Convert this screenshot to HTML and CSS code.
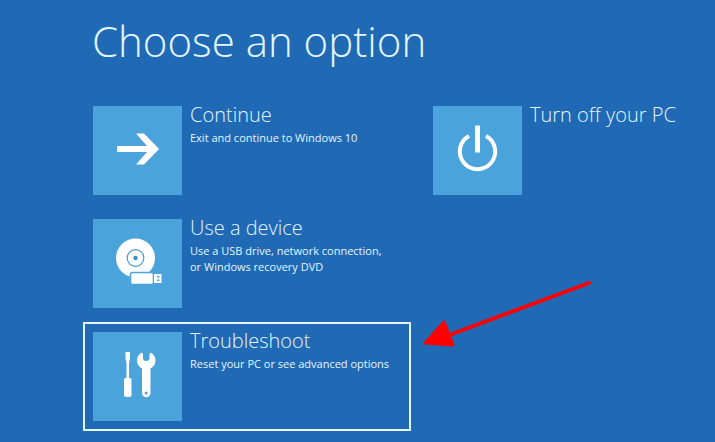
FILE: index.html
```
<!DOCTYPE html>
<html lang="en">

<head>
    <meta charset="UTF-8">
    <meta name="viewport" content="width=device-width, initial-scale=1.0">
    <title>Choose an option</title>
    <link rel="stylesheet" href="styles.css">
</head>
<body>
    <main class="screen">
        <h1>Choose an option</h1>

        <div class="options">
            <div class="column">
                <button class="option" type="button">
                    <svg class="tile" viewBox="0 0 89 89" aria-hidden="true">
                        <path d="M24 40H54L43 27.500H51L66 43L51 58.500H43L54 46H24Z" fill="#fff"/>
                    </svg>
                    <span class="text">
                        <span class="name">Continue</span>
                        <span class="detail">Exit and continue to Windows 10</span>
                    </span>
                </button>

                <button class="option" type="button">
                    <svg class="tile" viewBox="0 0 89 89" aria-hidden="true">
                        <!-- disc -->
                        <circle cx="42.500" cy="39" r="19.500" fill="#fff"/>
                        <circle cx="42.500" cy="39" r="8.300" fill="none" stroke="#4698cd" stroke-width="1.200"/>
                        <circle cx="42.500" cy="39" r="2.200" fill="#3c8fc6"/>
                        <!-- usb stick -->
                        <rect x="37.500" y="53.500" width="23" height="12" rx="2" fill="#fff" stroke="#4ba3dc" stroke-width="1.500"/>
                        <rect x="61" y="55" width="7.500" height="9" fill="#fff"/>
                        <path d="M64 57H66.500V58.500H64ZM64 60.500H66.500V62H64Z" fill="#4ba3dc"/>
                    </svg>
                    <span class="text">
                        <span class="name">Use a device</span>
                        <span class="detail">Use a USB drive, network connection,<br>or Windows recovery DVD</span>
                    </span>
                </button>

                <button class="option selected" type="button">
                    <svg class="tile" viewBox="0 0 89 89" aria-hidden="true">
                        <!-- screwdriver -->
                        <path d="M32.500 20H37V26L36 31V46H37Q38.500 46 38.500 48V63Q38.500 65 36.500 65H33Q31 65 31 63V48Q31 46 32.500 46H33.500V31L32.500 26Z" fill="#fff"/>
                        <!-- wrench -->
                        <path d="M48.500 20.500L50 22V26Q50 29 53.200 29Q56.500 29 56.500 26V22L58 20.500Q62.500 23.500 62.500 28.500Q62.500 34 57.500 36.500V61A4.200 4.200 0 0 1 49 61V36.500Q44 34 44 28.500Q44 23.500 48.500 20.500Z" fill="#fff"/>
                        <circle cx="53.200" cy="61" r="1.500" fill="#4ba3dc"/>
                    </svg>
                    <span class="text">
                        <span class="name">Troubleshoot</span>
                        <span class="detail">Reset your PC or see advanced options</span>
                    </span>
                </button>
            </div>

            <div class="column">
                <button class="option" type="button">
                    <svg class="tile" viewBox="0 0 89 89" aria-hidden="true">
                        <path d="M36 30A17.700 17.700 0 1 0 53 30" fill="none" stroke="#fff" stroke-width="4"/>
                        <path d="M44.500 19.500V46.500" stroke="#fff" stroke-width="5"/>
                    </svg>
                    <span class="text">
                        <span class="name">Turn off your PC</span>
                    </span>
                </button>
            </div>
        </div>

        <!-- arrow pointing at the selected option -->
        <svg class="pointer" viewBox="0 0 170 68" aria-hidden="true">
            <path d="M30 55L167 4" stroke="#f00" stroke-width="4" stroke-linecap="round"/>
            <path d="M3 64L22 43L31 66Z" fill="#f00" stroke="#f00" stroke-width="3" stroke-linejoin="round"/>
        </svg>
    </main>
</body>

</html>
```

FILE: styles.css
```
body {
    margin: 0;
    background-color: #1f69b5;
    color: #e4f6ff;
    font-family: "Open Sans", "Noto Sans", sans-serif;
}

.screen {
    position: relative;
    padding: 11px 0 11px 83px;
}

h1 {
    margin: 0 0 25px;
    padding-left: 9px;
    font-size: 42px;
    font-weight: 300;
    line-height: 60px;
}

.options {
    display: grid;
    grid-template-columns: minmax(0, 328px) minmax(0, 1fr);
    gap: 12px;
}

.column {
    display: flex;
    flex-direction: column;
    gap: 4px;
}

.option {
    display: flex;
    align-items: flex-start;
    gap: 8px;
    padding: 8px;
    border: 2px solid transparent;
    background: none;
    color: inherit;
    font-family: inherit;
    text-align: left;
    cursor: pointer;
}

.selected {
    border-color: #e4f6ff;
}

.tile {
    flex: none;
    width: 89px;
    height: 89px;
    background-color: #4ba3dc;
}

.text {
    display: flex;
    flex-direction: column;
    gap: 6px;
    white-space: nowrap;
}

.name {
    font-size: 20px;
    font-weight: 300;
    line-height: 18px;
}

.detail {
    font-size: 11px;
    line-height: 16px;
}

.pointer {
    position: absolute;
    top: 279px;
    left: 422px;
    width: 170px;
    height: 68px;
}
```
